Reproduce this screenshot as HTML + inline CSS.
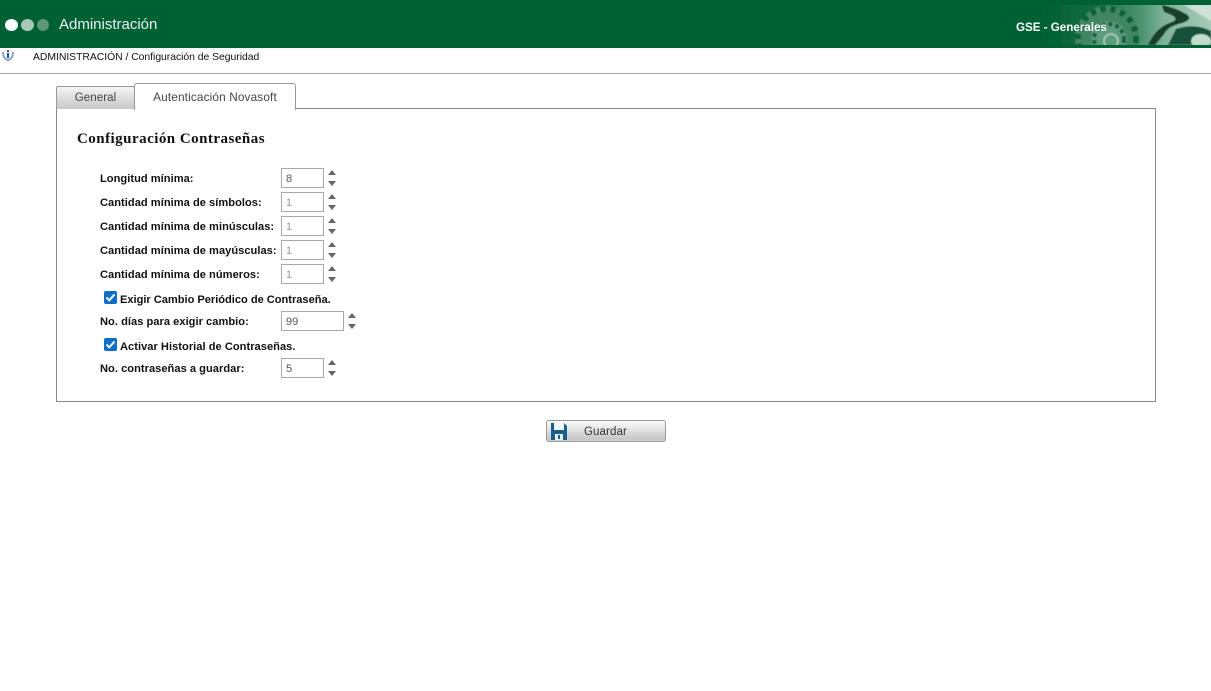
<!DOCTYPE html>
<html lang="es"><head><meta charset="utf-8"><title>Administración</title>
<style>
html,body{margin:0;padding:0;width:1211px;height:691px;overflow:hidden;background:#fff;font-family:"Liberation Sans",sans-serif}
.a{position:absolute;white-space:nowrap}
.lb{position:absolute;left:100px;font-size:11.1px;font-weight:bold;color:#111;white-space:nowrap;line-height:14px;letter-spacing:.03px}
.in{position:absolute;left:281px;width:41px;height:18px;border:1px solid #a9a9a9;background:#fff;box-sizing:content-box;font-size:11px;line-height:21px;color:#555;text-indent:4px}
.in.d{color:#999}
.up,.dn{position:absolute;width:0;height:0;border-left:4.5px solid transparent;border-right:4.5px solid transparent}
.up{border-bottom:5px solid #666}
.dn{border-top:5px solid #666}
.cb{position:absolute;left:104px;width:13px;height:13px;background:#0f6fc6;border-radius:2px}
</style></head><body>
<div class="a" style="left:0;top:0;width:1211px;height:48px;background:#006134"></div>
<svg class="a" style="left:1040px;top:5px" width="171" height="40" viewBox="0 0 171 40">
<defs>
<linearGradient id="g" x1="0" x2="1" y1="0" y2="0"><stop offset="0" stop-color="#006134"/><stop offset=".3" stop-color="#0f6a40"/><stop offset=".6" stop-color="#4f9573"/><stop offset=".72" stop-color="#7fb298"/><stop offset="1" stop-color="#a9ccb9"/></linearGradient>
<clipPath id="c"><rect width="171" height="40"/></clipPath>
<filter id="b"><feGaussianBlur stdDeviation=".5"/></filter>
</defs>
<g clip-path="url(#c)"><g filter="url(#b)">
<rect x="-2" y="-2" width="175" height="44" fill="url(#g)"/>
<circle cx="67" cy="33" r="32" fill="#3f8663"/>
<circle cx="67" cy="33" r="29" fill="none" stroke="#0f5f3a" stroke-width="6" stroke-dasharray="5 5"/>
<circle cx="69" cy="34" r="18" fill="#5a9c7c"/>
<circle cx="69" cy="34" r="15" fill="none" stroke="#14603f" stroke-width="4" stroke-dasharray="4 3"/>
<circle cx="71" cy="36" r="7" fill="none" stroke="#b5d2c3" stroke-width="1.5"/>
<path d="M122 0 Q136 3 146 9 Q154 14 142 18 Q128 21 124 29 L115 40 L108 40 Q116 22 132 17 Q142 13 124 7Z" fill="#123f2c"/>
<path d="M144 0 L171 16 V0Z" fill="#cfe2d6"/>
<path d="M136 24 Q155 18 171 26 V40 H128Z" fill="#17513a"/>
<ellipse cx="161" cy="36" rx="10" ry="7" fill="#bfdccc"/>
</g></g>
</svg>
<div class="a" style="left:1016px;top:20px;font-size:11.6px;font-weight:bold;color:#fff;line-height:16px">GSE - Generales</div>
<div class="a" style="left:5px;top:19px;width:13px;height:12px;border-radius:50%;background:#fff"></div>
<div class="a" style="left:21px;top:19px;width:13px;height:12px;border-radius:50%;background:#a9c9b8"></div>
<div class="a" style="left:37px;top:19px;width:12px;height:12px;border-radius:50%;background:#5d9679"></div>
<div class="a" style="left:59px;top:16px;font-size:15px;color:#e8f2ec;line-height:18px">Administración</div>
<svg class="a" style="left:2px;top:49px" width="12" height="12" viewBox="0 0 12 12"><path d="M1 3 Q1 10 6 11 Q11 10 11 3" fill="none" stroke="#8aa6cf" stroke-width="2"/><rect x="5" y="4" width="2" height="5" fill="#1f4f9f"/><rect x="5" y="1" width="2" height="2" fill="#1f4f9f"/></svg>
<div class="a" style="left:33px;top:51px;font-size:10.4px;color:#111;line-height:14px;letter-spacing:-.03px">ADMINISTRACIÓN / Configuración de Seguridad</div>
<div class="a" style="left:0;top:73px;width:1211px;height:1px;background:#a5a5a5"></div>
<div class="a" style="left:56px;top:108px;width:1098px;height:292px;border:1px solid #8a8a8a"></div>
<div class="a" style="left:56px;top:86px;width:77px;height:22px;border:1px solid #999;border-bottom:none;border-radius:2px 2px 0 0;background:linear-gradient(#f5f5f5,#d8d8d8 60%,#c9c9c9);text-align:center;font-size:11.5px;line-height:22px;color:#444;letter-spacing:.1px;box-sizing:content-box">General</div>
<div class="a" style="left:134px;top:83px;width:160px;height:26px;border:1px solid #999;border-bottom:none;border-radius:3px 3px 0 0;background:#fff;text-align:center;font-size:11.8px;line-height:26px;color:#444;letter-spacing:.14px">Autenticación Novasoft</div>
<div class="a" style="left:77px;top:130px;font-family:'Liberation Serif',serif;font-size:15px;font-weight:bold;color:#111;line-height:18px;letter-spacing:.47px">Configuración Contraseñas</div>

<div class="lb" style="top:172px">Longitud mínima:</div>
<div class="in" style="top:168px">8</div><div class="up" style="left:327.5px;top:170px"></div><div class="dn" style="left:327.5px;top:181px"></div>
<div class="lb" style="top:196px">Cantidad mínima de símbolos:</div>
<div class="in d" style="top:192px">1</div><div class="up" style="left:327.5px;top:194px"></div><div class="dn" style="left:327.5px;top:205px"></div>
<div class="lb" style="top:220px">Cantidad mínima de minúsculas:</div>
<div class="in d" style="top:216px">1</div><div class="up" style="left:327.5px;top:218px"></div><div class="dn" style="left:327.5px;top:229px"></div>
<div class="lb" style="top:244px">Cantidad mínima de mayúsculas:</div>
<div class="in d" style="top:240px">1</div><div class="up" style="left:327.5px;top:242px"></div><div class="dn" style="left:327.5px;top:253px"></div>
<div class="lb" style="top:268px">Cantidad mínima de números:</div>
<div class="in d" style="top:264px">1</div><div class="up" style="left:327.5px;top:266px"></div><div class="dn" style="left:327.5px;top:277px"></div>

<div class="cb" style="top:291px"><svg width="13" height="13" viewBox="0 0 13 13"><path d="M2.5 6.5 L5.3 9.3 L10.5 3.5" fill="none" stroke="#fff" stroke-width="2"/></svg></div>
<div class="lb" style="left:120px;top:293px;letter-spacing:-.02px">Exigir Cambio Periódico de Contraseña.</div>
<div class="lb" style="top:315px">No. días para exigir cambio:</div>
<div class="in" style="top:311px;width:61px">99</div><div class="up" style="left:347.5px;top:313px"></div><div class="dn" style="left:347.5px;top:324px"></div>
<div class="cb" style="top:338px"><svg width="13" height="13" viewBox="0 0 13 13"><path d="M2.5 6.5 L5.3 9.3 L10.5 3.5" fill="none" stroke="#fff" stroke-width="2"/></svg></div>
<div class="lb" style="left:120px;top:340px">Activar Historial de Contraseñas.</div>
<div class="lb" style="top:362px">No. contraseñas a guardar:</div>
<div class="in" style="top:358px">5</div><div class="up" style="left:327.5px;top:360px"></div><div class="dn" style="left:327.5px;top:371px"></div>

<div class="a" style="left:546px;top:420px;width:118px;height:20px;border:1px solid #9a9a9a;border-radius:3px;background:linear-gradient(#fbfbfb,#e2e2e2 45%,#c6c6c6 90%,#d4d4d4);font-size:11.5px;line-height:23px;color:#333;text-indent:37px;letter-spacing:.1px">Guardar</div>
<svg class="a" style="left:551px;top:422px" width="16" height="18" viewBox="0 0 16 18"><path d="M0 1 H13 L16 4 V18 H0Z" fill="#1c5f8e"/><rect x="3" y="1" width="10" height="7" fill="#f2f6f8"/><rect x="4" y="12" width="8" height="6" fill="#e8eef2"/><rect x="7" y="13" width="2" height="4" fill="#1c5f8e"/></svg>
</body></html>
